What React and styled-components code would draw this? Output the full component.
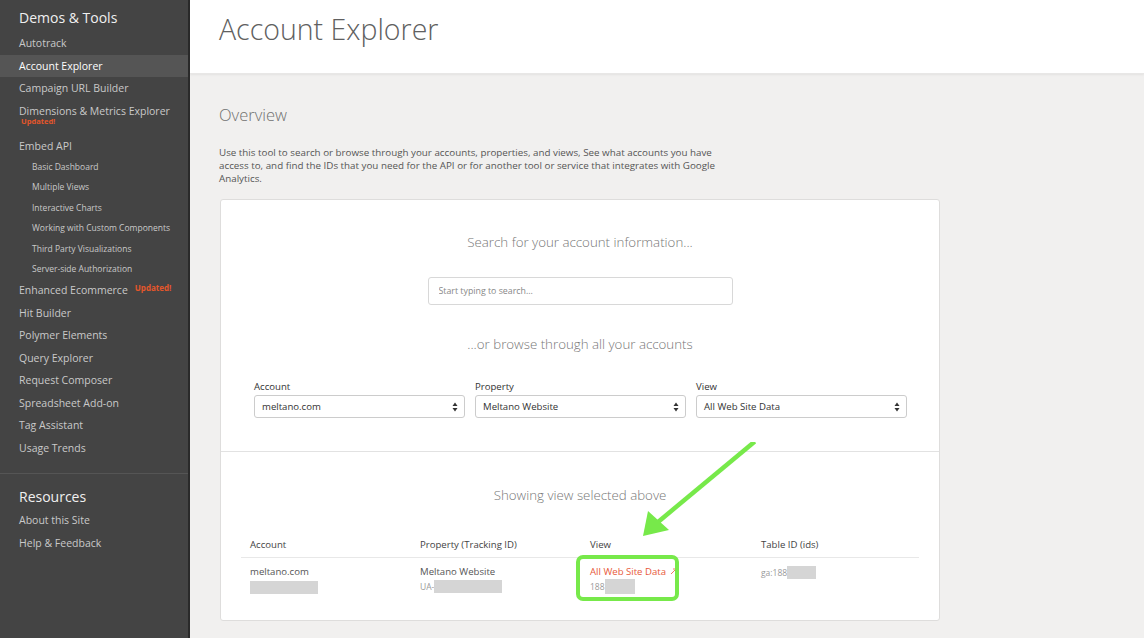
import React from "react";
import styled, { createGlobalStyle } from "styled-components";

const GlobalStyle = createGlobalStyle`
  body {
    margin: 0;
    font-family: "Open Sans", "Liberation Sans", sans-serif;
    background: #f1f0ef;
  }
`;

const navItems = [
  { label: "Autotrack" },
  { label: "Account Explorer", active: true },
  { label: "Campaign URL Builder" },
  { label: "Dimensions & Metrics Explorer", badge: "below" },
  { label: "Embed API" },
  { label: "Basic Dashboard", sub: true },
  { label: "Multiple Views", sub: true },
  { label: "Interactive Charts", sub: true },
  { label: "Working with Custom Components", sub: true },
  { label: "Third Party Visualizations", sub: true },
  { label: "Server-side Authorization", sub: true },
  { label: "Enhanced Ecommerce", badge: "inline" },
  { label: "Hit Builder" },
  { label: "Polymer Elements" },
  { label: "Query Explorer" },
  { label: "Request Composer" },
  { label: "Spreadsheet Add-on" },
  { label: "Tag Assistant" },
  { label: "Usage Trends" },
];

const SelectArrows = () => (
  <svg width="6" height="10" viewBox="0 0 6 10">
    <path d="M3 0.5 L5.5 4 L0.5 4 Z" fill="#333" />
    <path d="M3 9.5 L5.5 6 L0.5 6 Z" fill="#333" />
  </svg>
);

const ExternalIcon = () => (
  <svg width="7" height="7" viewBox="0 0 7 7">
    <path d="M1 6 L6 1 M3 1 H6 V4" stroke="#e8593a" strokeWidth="0.8" fill="none" />
  </svg>
);

const App = () => {
  return (
    <>
      <GlobalStyle />
      <Layout>
        <Sidebar>
          <NavTitle>Demos &amp; Tools</NavTitle>
          <NavList>
            {navItems.map((item) => (
              <NavItem
                key={item.label}
                $active={item.active}
                $sub={item.sub}
                $tall={item.badge === "below"}
              >
                <span>{item.label}</span>
                {item.badge === "inline" && <InlineBadge>Updated!</InlineBadge>}
                {item.badge === "below" && <BelowBadge>Updated!</BelowBadge>}
              </NavItem>
            ))}
          </NavList>
          <NavDivider />
          <NavTitle $second>Resources</NavTitle>
          <NavItem>About this Site</NavItem>
          <NavItem>Help &amp; Feedback</NavItem>
        </Sidebar>
        <Main>
          <Header>
            <Title>Account Explorer</Title>
          </Header>
          <Content>
            <Overview>Overview</Overview>
            <Intro>
              Use this tool to search or browse through your accounts, properties, and views, See what accounts you have
              access to, and find the IDs that you need for the API or for another tool or service that integrates with Google
              Analytics.
            </Intro>
            <Card>
              <TopSection>
                <Heading>Search for your account information...</Heading>
                <SearchInput placeholder="Start typing to search..." />
                <Heading $browse>...or browse through all your accounts</Heading>
                <SelectRow>
                  <Field>
                    <FieldLabel>Account</FieldLabel>
                    <SelectBox>
                      <span>meltano.com</span>
                      <SelectArrows />
                    </SelectBox>
                  </Field>
                  <Field>
                    <FieldLabel>Property</FieldLabel>
                    <SelectBox>
                      <span>Meltano Website</span>
                      <SelectArrows />
                    </SelectBox>
                  </Field>
                  <Field>
                    <FieldLabel>View</FieldLabel>
                    <SelectBox>
                      <span>All Web Site Data</span>
                      <SelectArrows />
                    </SelectBox>
                  </Field>
                </SelectRow>
              </TopSection>
              <BottomSection>
                <Heading>Showing view selected above</Heading>
                <Table>
                  <HeadRow>
                    <HeadCell>Account</HeadCell>
                    <HeadCell>Property (Tracking ID)</HeadCell>
                    <HeadCell>View</HeadCell>
                    <HeadCell>Table ID (ids)</HeadCell>
                  </HeadRow>
                  <BodyRow>
                    <Cell>
                      <div>meltano.com</div>
                      <Redacted $w={68} />
                    </Cell>
                    <Cell>
                      <div>Meltano Website</div>
                      <SubLine>UA-<Redacted $w={68} /></SubLine>
                    </Cell>
                    <Cell>
                      <Highlight>
                        <ViewLink>All Web Site Data <ExternalIcon /></ViewLink>
                        <SubLine>188<Redacted $w={30} $h={15} /></SubLine>
                      </Highlight>
                    </Cell>
                    <Cell>
                      <SubLine $top>ga:188<Redacted $w={29} /></SubLine>
                    </Cell>
                  </BodyRow>
                </Table>
                <Arrow width="130" height="100" viewBox="0 0 130 100">
                  <path d="M125 1 L30 80" stroke="#77e94a" strokeWidth="4.5" fill="none" strokeLinecap="square" />
                  <path d="M15 94 L20 69 L41 88 Z" fill="#77e94a" />
                </Arrow>
              </BottomSection>
            </Card>
          </Content>
        </Main>
      </Layout>
    </>
  );
};

const Layout = styled.div`
  display: flex;
  min-height: 100vh;
`;

const Sidebar = styled.nav`
  width: 188px;
  flex-shrink: 0;
  background: #444444;
  border-right: 2px solid #2a2a2a;
  padding-top: 7px;
  display: flex;
  flex-direction: column;
`;

const NavList = styled.div`
  margin-top: 3px;
  display: flex;
  flex-direction: column;
`;

const NavTitle = styled.div`
  font-size: 14px;
  color: #f0f0f0;
  padding: 0 19px;
  height: ${(p) => (p.$second ? "23px" : "22px")};
  line-height: 22px;
  margin-top: ${(p) => (p.$second ? "12px" : "0")};
`;

const NavItem = styled.div`
  position: relative;
  font-size: ${(p) => (p.$sub ? "8.5px" : "10.5px")};
  color: ${(p) => (p.$active ? "#ffffff" : "#c9c9c9")};
  background: ${(p) => (p.$active ? "#555555" : "transparent")};
  padding-left: ${(p) => (p.$sub ? "32px" : "19px")};
  height: ${(p) => (p.$tall ? "35px" : p.$sub ? "20.4px" : "22.5px")};
  line-height: ${(p) => (p.$sub ? "20.4px" : "22.5px")};
  white-space: nowrap;
`;

const InlineBadge = styled.span`
  font-size: 8px;
  font-weight: 700;
  color: #e4562a;
  margin-left: 7px;
  position: relative;
  top: -3px;
`;

const BelowBadge = styled.span`
  position: absolute;
  left: 21px;
  top: 17px;
  font-size: 7.5px;
  font-weight: 700;
  color: #e4562a;
  line-height: 9px;
`;

const NavDivider = styled.div`
  height: 1px;
  background: #555555;
  margin-top: 14px;
`;

const Main = styled.main`
  flex: 1;
  display: flex;
  flex-direction: column;
`;

const Header = styled.header`
  height: 74px;
  background: #ffffff;
  padding-left: 29px;
  box-shadow: 0 1px 2px rgba(0, 0, 0, 0.06);
  border-bottom: 1px solid #e8e7e6;
  box-sizing: border-box;
`;

const Title = styled.h1`
  margin: 0;
  padding-top: 9px;
  font-size: 28.5px;
  font-weight: 300;
  color: #606060;
  line-height: 40px;
`;

const Content = styled.div`
  padding: 29px 0 0 29px;
`;

const Overview = styled.h2`
  margin: 0;
  font-size: 16.5px;
  font-weight: 300;
  color: #707070;
  line-height: 24px;
`;

const Intro = styled.p`
  margin: 19px 0 0;
  width: 520px;
  font-size: 9.8px;
  line-height: 13px;
  color: #555555;
`;

const Card = styled.section`
  margin: 14px 0 0 1px;
  width: 720px;
  box-sizing: border-box;
  background: #ffffff;
  border: 1px solid #dedddc;
  border-radius: 3px;
`;

const TopSection = styled.div`
  height: 252px;
  box-sizing: border-box;
  padding: 31px 33px 0;
  display: flex;
  flex-direction: column;
  align-items: center;
  border-bottom: 1px solid #e2e2e2;
`;

const Heading = styled.div`
  font-size: 13.3px;
  font-weight: 300;
  color: #777777;
  line-height: 22px;
  margin-top: ${(p) => (p.$browse ? "28px" : "0")};
`;

const SearchInput = styled.input`
  margin-top: 24px;
  width: 305px;
  height: 28px;
  box-sizing: border-box;
  border: 1px solid #d8d8d8;
  border-radius: 3px;
  padding: 0 10px;
  font-family: inherit;
  font-size: 8.8px;
  color: #555;
  &::placeholder {
    color: #888888;
  }
`;

const SelectRow = styled.div`
  margin-top: 25px;
  align-self: stretch;
  display: grid;
  grid-template-columns: 211px 211px 211px;
  column-gap: 10px;
`;

const Field = styled.div`
  display: flex;
  flex-direction: column;
`;

const FieldLabel = styled.label`
  font-size: 9.6px;
  color: #333333;
  line-height: 14px;
  margin-bottom: 1px;
`;

const SelectBox = styled.div`
  height: 23px;
  box-sizing: border-box;
  border: 1px solid #cccccc;
  border-radius: 3px;
  display: flex;
  align-items: center;
  justify-content: space-between;
  padding: 0 6px 0 7px;
  font-size: 9.6px;
  color: #333333;
`;

const BottomSection = styled.div`
  position: relative;
  height: 168px;
  box-sizing: border-box;
  padding: 32px 20px 0;
  display: flex;
  flex-direction: column;
  align-items: center;
`;

const Table = styled.div`
  margin-top: 31px;
  align-self: stretch;
`;

const HeadRow = styled.div`
  display: grid;
  grid-template-columns: 170px 170px 171px 1fr;
  border-bottom: 1px solid #e8e8e8;
  padding-bottom: 5px;
`;

const HeadCell = styled.div`
  padding-left: 9px;
  font-size: 9.6px;
  color: #444444;
  line-height: 15px;
`;

const BodyRow = styled.div`
  display: grid;
  grid-template-columns: 170px 170px 171px 1fr;
  padding-top: 6px;
`;

const Cell = styled.div`
  padding-left: 9px;
  font-size: 9.6px;
  color: #555555;
  line-height: 15px;
`;

const SubLine = styled.div`
  display: flex;
  align-items: center;
  font-size: 8.5px;
  color: #999999;
  line-height: 15px;
  margin-top: ${(p) => (p.$top ? "1px" : "0")};
`;

const Redacted = styled.span`
  display: inline-block;
  width: ${(p) => p.$w}px;
  height: ${(p) => p.$h || 13}px;
  background: #d5d5d5;
  vertical-align: middle;
`;

const Highlight = styled.div`
  position: relative;
  display: inline-block;
  &::before {
    content: "";
    position: absolute;
    left: -14px;
    top: -9px;
    width: 103px;
    height: 46px;
    box-sizing: border-box;
    border: 4px solid #77e94a;
    border-radius: 7px;
  }
`;

const ViewLink = styled.div`
  color: #e8593a;
  display: flex;
  align-items: center;
  gap: 4px;
  white-space: nowrap;
`;

const Arrow = styled.svg`
  position: absolute;
  left: 407px;
  top: -10px;
`;

export default App;
